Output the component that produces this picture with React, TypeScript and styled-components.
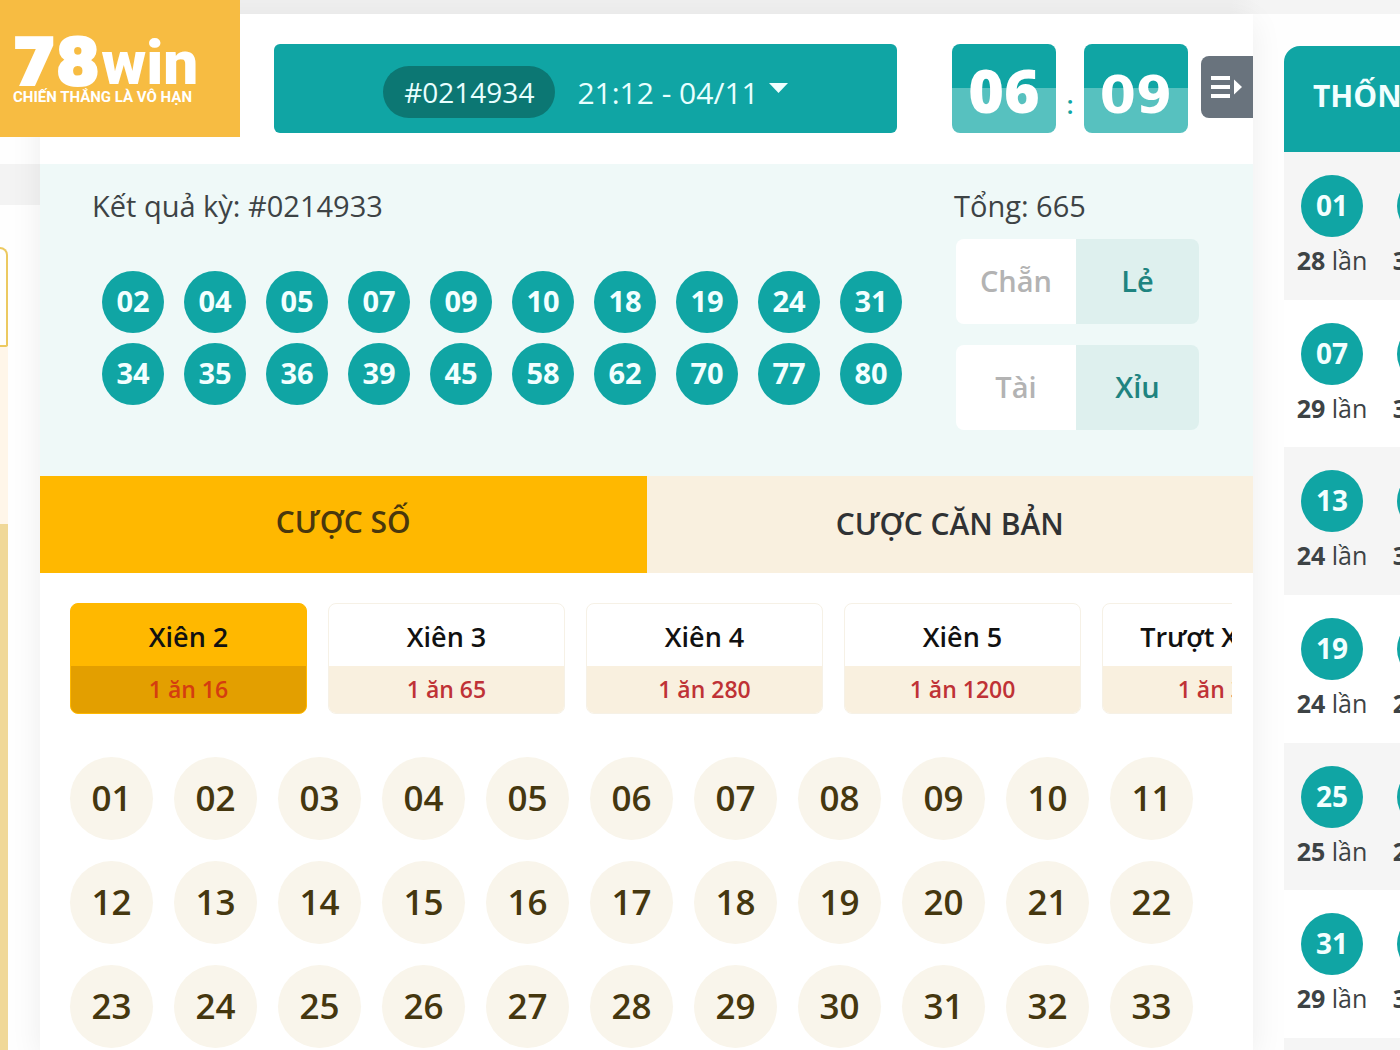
import React, { useState } from "react";
import styled, { createGlobalStyle } from "styled-components";

const teal = "#10a5a4";
const amber = "#ffb800";
const cream = "#f9f0df";

const GlobalStyle = createGlobalStyle`
  *, *::before, *::after { box-sizing: border-box; }
  body {
    margin: 0;
    background: #fefefe;
    color: #3d4345;
    font-family: "Open Sans", "Noto Sans", sans-serif;
    overflow: hidden;
  }
  button { font: inherit; color: inherit; border: 0; padding: 0; background: none; cursor: pointer; }
  ul { list-style: none; margin: 0; padding: 0; }
  h1, h2, p { margin: 0; font-weight: 400; }
`;

const Page = styled.div`
  position: relative;
  height: 100vh;
  display: flex;
  flex-direction: column;
  overflow: hidden;
`;

const TopStrip = styled.div`
  flex: none;
  height: 14px;
  background: linear-gradient(90deg, #efefef 88%, #f4f4f4 90%);
`;

const Columns = styled.div`
  flex: 1;
  min-height: 0;
  display: grid;
  grid-template-columns: 40px minmax(0, 1fr) 147px;
`;

const Brand = styled.a`
  position: absolute;
  z-index: 2;
  top: 0;
  left: 0;
  width: 240px;
  height: 137px;
  padding: 31px 0 0 13px;
  background: #f7bc42;
  color: #fff;
  text-decoration: none;
  font-family: Roboto, "Noto Sans", sans-serif;
  white-space: nowrap;
`;

const BrandName = styled.span`
  display: flex;
  align-items: baseline;
  height: 56px;
  line-height: 64px;
  font-weight: 900;
  font-size: 62px;
`;

const BrandNumber = styled.span`
  font-family: "DejaVu Sans", sans-serif;
  font-weight: 700;
  font-size: 62px;
  -webkit-text-stroke: 4px #fff;
  padding-right: 2px;
`;

const Slogan = styled.span`
  display: block;
  font-size: 15px;
  line-height: 20px;
  font-weight: 700;
`;

const LeftRail = styled.aside`
  display: flex;
  flex-direction: column;
  padding-top: 150px;
`;

const RailBar = styled.div`
  flex: none;
  height: 41px;
  background: #f3f3f3;
`;

const RailBox = styled.div`
  flex: none;
  width: 8px;
  height: 100px;
  margin-top: 42px;
  border: 2px solid #ecc960;
  border-left: 0;
  border-radius: 0 8px 2px 0;
`;

const RailPanel = styled.div`
  flex: 1;
  width: 8px;
  background: linear-gradient(#fff6e9 177px, #f0d898 177px);
`;

const Game = styled.main`
  position: relative;
  display: flex;
  flex-direction: column;
  min-height: 0;
  background: #fff;
  box-shadow: 0 8px 30px rgba(0, 0, 0, 0.07);
`;

const Header = styled.header`
  flex: none;
  display: flex;
  height: 150px;
  padding: 30px 0 0 234px;
`;

const DrawPicker = styled.button`
  flex: 1;
  height: 89px;
  display: flex;
  align-items: center;
  justify-content: center;
  gap: 22px;
  padding-top: 7px;
  border-radius: 6px;
  background: ${teal};
  color: #e8ffff;
  font-size: 30px;
  white-space: nowrap;
`;

const DrawId = styled.span`
  height: 52px;
  padding: 0 21px;
  border-radius: 26px;
  background: #0c7773;
  font-size: 28px;
  line-height: 52px;
`;

const DrawTime = styled.span`
  display: flex;
  align-items: center;
  gap: 10px;
`;

const Caret = styled.svg`
  width: 19px;
  height: 10px;
  margin-bottom: 8px;
`;

const Clock = styled.div`
  display: flex;
  margin: 0 13px 0 55px;
`;

const ClockTile = styled.span<{ $wide?: boolean }>`
  width: 104px;
  height: 89px;
  padding-top: 5px;
  border-radius: 8px;
  background: linear-gradient(${teal} 50%, #57c1bf 50%);
  color: #fff;
  text-align: center;
  font-family: ${(p) => (p.$wide ? '"DejaVu Sans"' : '"Open Sans"')}, sans-serif;
  font-weight: ${(p) => (p.$wide ? 700 : 800)};
  font-size: ${(p) => (p.$wide ? 52 : 61)}px;
  line-height: ${(p) => (p.$wide ? 92 : 82)}px;
`;

const Colon = styled.span`
  width: 28px;
  color: ${teal};
  text-align: center;
  font-size: 26px;
  font-weight: 600;
  line-height: 120px;
`;

const MenuButton = styled.button`
  width: 52px;
  height: 62px;
  margin-top: 12px;
  padding-left: 10px;
  border-radius: 8px 0 0 8px;
  background: #69737d;
  display: flex;
  align-items: center;
`;

const Results = styled.section`
  flex: none;
  display: flex;
  gap: 52px;
  height: 312px;
  padding: 22px 54px 0 52px;
  background: #eff9f8;
`;

const DrawResult = styled.div`
  flex: 1;
`;

const ResultTitle = styled.h2`
  font-size: 29px;
  line-height: 40px;
  white-space: nowrap;
`;

const Balls = styled.ul`
  display: grid;
  grid-template-columns: repeat(10, 62px);
  justify-content: space-between;
  row-gap: 10px;
  margin: 45px 0 0 10px;
`;

const Ball = styled.li`
  width: 62px;
  height: 62px;
  border-radius: 50%;
  background: ${teal};
  color: #f2ffff;
  text-align: center;
  font-size: 29px;
  font-weight: 700;
  line-height: 60px;
`;

const Summary = styled.div`
  width: 245px;
`;

const Pair = styled.div`
  display: grid;
  grid-template-columns: 120px 1fr;
  height: 85px;
  margin: 13px 0 21px 2px;
  border-radius: 8px;
  overflow: hidden;
  text-align: center;
  font-size: 29px;
  font-weight: 600;
  line-height: 84px;
`;

const PairItem = styled.span<{ $on?: boolean }>`
  background: ${(p) => (p.$on ? "#def0ee" : "#fff")};
  color: ${(p) => (p.$on ? "#1f8480" : "#b3b3b3")};
`;

const Tabs = styled.div`
  flex: none;
  display: grid;
  grid-template-columns: 1fr 1fr;
`;

const Tab = styled.button<{ $active: boolean }>`
  height: 97px;
  padding-bottom: ${(p) => (p.$active ? 6 : 2)}px;
  background: ${(p) => (p.$active ? amber : cream)};
  color: ${(p) => (p.$active ? "#49370d" : "#303234")};
  font-size: 30px;
  font-weight: 600;
`;

const BetTypes = styled.div`
  flex: none;
  display: flex;
  gap: 21px;
  margin: 30px 21px 0 30px;
  overflow: hidden;
`;

const BetType = styled.button<{ $active: boolean }>`
  flex: none;
  width: 237px;
  border: 1px solid ${(p) => (p.$active ? amber : "#f6f1e6")};
  border-radius: 8px;
  overflow: hidden;
  background: ${(p) => (p.$active ? amber : "#fff")};
  white-space: nowrap;
`;

const BetName = styled.span`
  display: block;
  padding-top: 3px;
  color: #111;
  font-size: 27px;
  font-weight: 600;
  line-height: 59px;
`;

const BetOdds = styled.span<{ $active: boolean }>`
  display: block;
  background: ${(p) => (p.$active ? "#e39f00" : cream)};
  color: ${(p) => (p.$active ? "#d43d10" : "#bf3236")};
  font-size: 23px;
  font-weight: 600;
  line-height: 47px;
`;

const NumberGrid = styled.div`
  display: grid;
  grid-template-columns: repeat(auto-fill, 83px);
  gap: 21px;
  padding: 43px 30px 0;
`;

const NumberButton = styled.button`
  height: 83px;
  padding-bottom: 2px;
  border-radius: 50%;
  background: #f9f5eb;
  color: #45370f;
  font-size: 35px;
  font-weight: 600;
`;

const Stats = styled.aside`
  display: flex;
  flex-direction: column;
  min-height: 0;
  margin-left: 31px;
  padding-top: 32px;
`;

const StatsTitle = styled.h2`
  flex: none;
  height: 106px;
  padding-left: 29px;
  border-radius: 16px 0 0 0;
  background: ${teal};
  color: #f2ffff;
  font-size: 30px;
  font-weight: 700;
  line-height: 100px;
  white-space: nowrap;
  overflow: hidden;
`;

const StatsRows = styled.ul`
  flex: 1;
  display: grid;
  grid-auto-rows: 1fr;
  padding-bottom: 12px;
  background: #f5f5f5;
`;

const StatsRow = styled.li`
  display: grid;
  grid-template-columns: 96px 96px;
  padding-top: 23px;
  overflow: hidden;
  background: #f5f5f5;
  &:nth-child(even) { background: #fff; }
`;

const StatCell = styled.div`
  display: flex;
  flex-direction: column;
  align-items: center;
  gap: 9px;
  font-size: 25px;
  line-height: 28px;
  white-space: nowrap;
`;

const StatBall = styled(Ball).attrs({ as: "span" })`
  font-size: 28px;
`;

const drawn = [
  "02", "04", "05", "07", "09", "10", "18", "19", "24", "31",
  "34", "35", "36", "39", "45", "58", "62", "70", "77", "80",
];

const betTypes = [
  { name: "Xiên 2", odds: "1 ăn 16" },
  { name: "Xiên 3", odds: "1 ăn 65" },
  { name: "Xiên 4", odds: "1 ăn 280" },
  { name: "Xiên 5", odds: "1 ăn 1200" },
  { name: "Trượt Xiên 4", odds: "1 ăn 3.2" },
];

const stats = [
  [["01", 28], ["02", 30]],
  [["07", 29], ["08", 31]],
  [["13", 24], ["14", 30]],
  [["19", 24], ["20", 27]],
  [["25", 25], ["26", 28]],
  [["31", 29], ["32", 30]],
];

const numbers = Array.from({ length: 33 }, (_, i) => String(i + 1).padStart(2, "0"));

export default function App() {
  const [tab, setTab] = useState(0);
  const [bet, setBet] = useState(0);

  return (
    <Page>
      <GlobalStyle />
      <TopStrip />
      <Brand href="#">
        <BrandName><BrandNumber>78</BrandNumber>win</BrandName>
        <Slogan>CHIẾN THẮNG LÀ VÔ HẠN</Slogan>
      </Brand>
      <Columns>
        <LeftRail>
          <RailBar />
          <RailBox />
          <RailPanel />
        </LeftRail>
        <Game>
          <Header>
            <DrawPicker aria-haspopup="listbox">
              <DrawId>#0214934</DrawId>
              <DrawTime>
                21:12 - 04/11
                <Caret viewBox="0 0 19 10" aria-hidden="true"><path d="M0 0h19L9.500 10z" fill="#f0ffff" /></Caret>
              </DrawTime>
            </DrawPicker>
            <Clock>
              <ClockTile>06</ClockTile>
              <Colon>:</Colon>
              <ClockTile $wide>09</ClockTile>
            </Clock>
            <MenuButton aria-label="Menu">
              <svg width="32" height="22" viewBox="0 0 32 22" fill="#fff" aria-hidden="true">
                <path d="M0 0h19v4H0zM0 9h19v4H0zM0 18h19v4H0z" />
                <path d="M23 3.500 31 11l-8 7.500z" />
              </svg>
            </MenuButton>
          </Header>
          <Results>
            <DrawResult>
              <ResultTitle>Kết quả kỳ: #0214933</ResultTitle>
              <Balls>{drawn.map((n) => <Ball key={n}>{n}</Ball>)}</Balls>
            </DrawResult>
            <Summary>
              <ResultTitle>Tổng: 665</ResultTitle>
              <Pair><PairItem>Chẵn</PairItem><PairItem $on>Lẻ</PairItem></Pair>
              <Pair><PairItem>Tài</PairItem><PairItem $on>Xỉu</PairItem></Pair>
            </Summary>
          </Results>
          <Tabs role="tablist">
            {["CƯỢC SỐ", "CƯỢC CĂN BẢN"].map((label, i) => (
              <Tab key={label} role="tab" aria-selected={tab === i} $active={tab === i} onClick={() => setTab(i)}>
                {label}
              </Tab>
            ))}
          </Tabs>
          <BetTypes>
            {betTypes.map((b, i) => (
              <BetType key={b.name} $active={bet === i} onClick={() => setBet(i)}>
                <BetName>{b.name}</BetName>
                <BetOdds $active={bet === i}>{b.odds}</BetOdds>
              </BetType>
            ))}
          </BetTypes>
          <NumberGrid>
            {numbers.map((n) => <NumberButton key={n}>{n}</NumberButton>)}
          </NumberGrid>
        </Game>
        <Stats>
          <StatsTitle>THỐNG KÊ</StatsTitle>
          <StatsRows>
            {stats.map((row, i) => (
              <StatsRow key={i}>
                {row.map(([n, count]) => (
                  <StatCell key={n}>
                    <StatBall>{n}</StatBall>
                    <span><b>{count}</b> lần</span>
                  </StatCell>
                ))}
              </StatsRow>
            ))}
          </StatsRows>
        </Stats>
      </Columns>
    </Page>
  );
}
